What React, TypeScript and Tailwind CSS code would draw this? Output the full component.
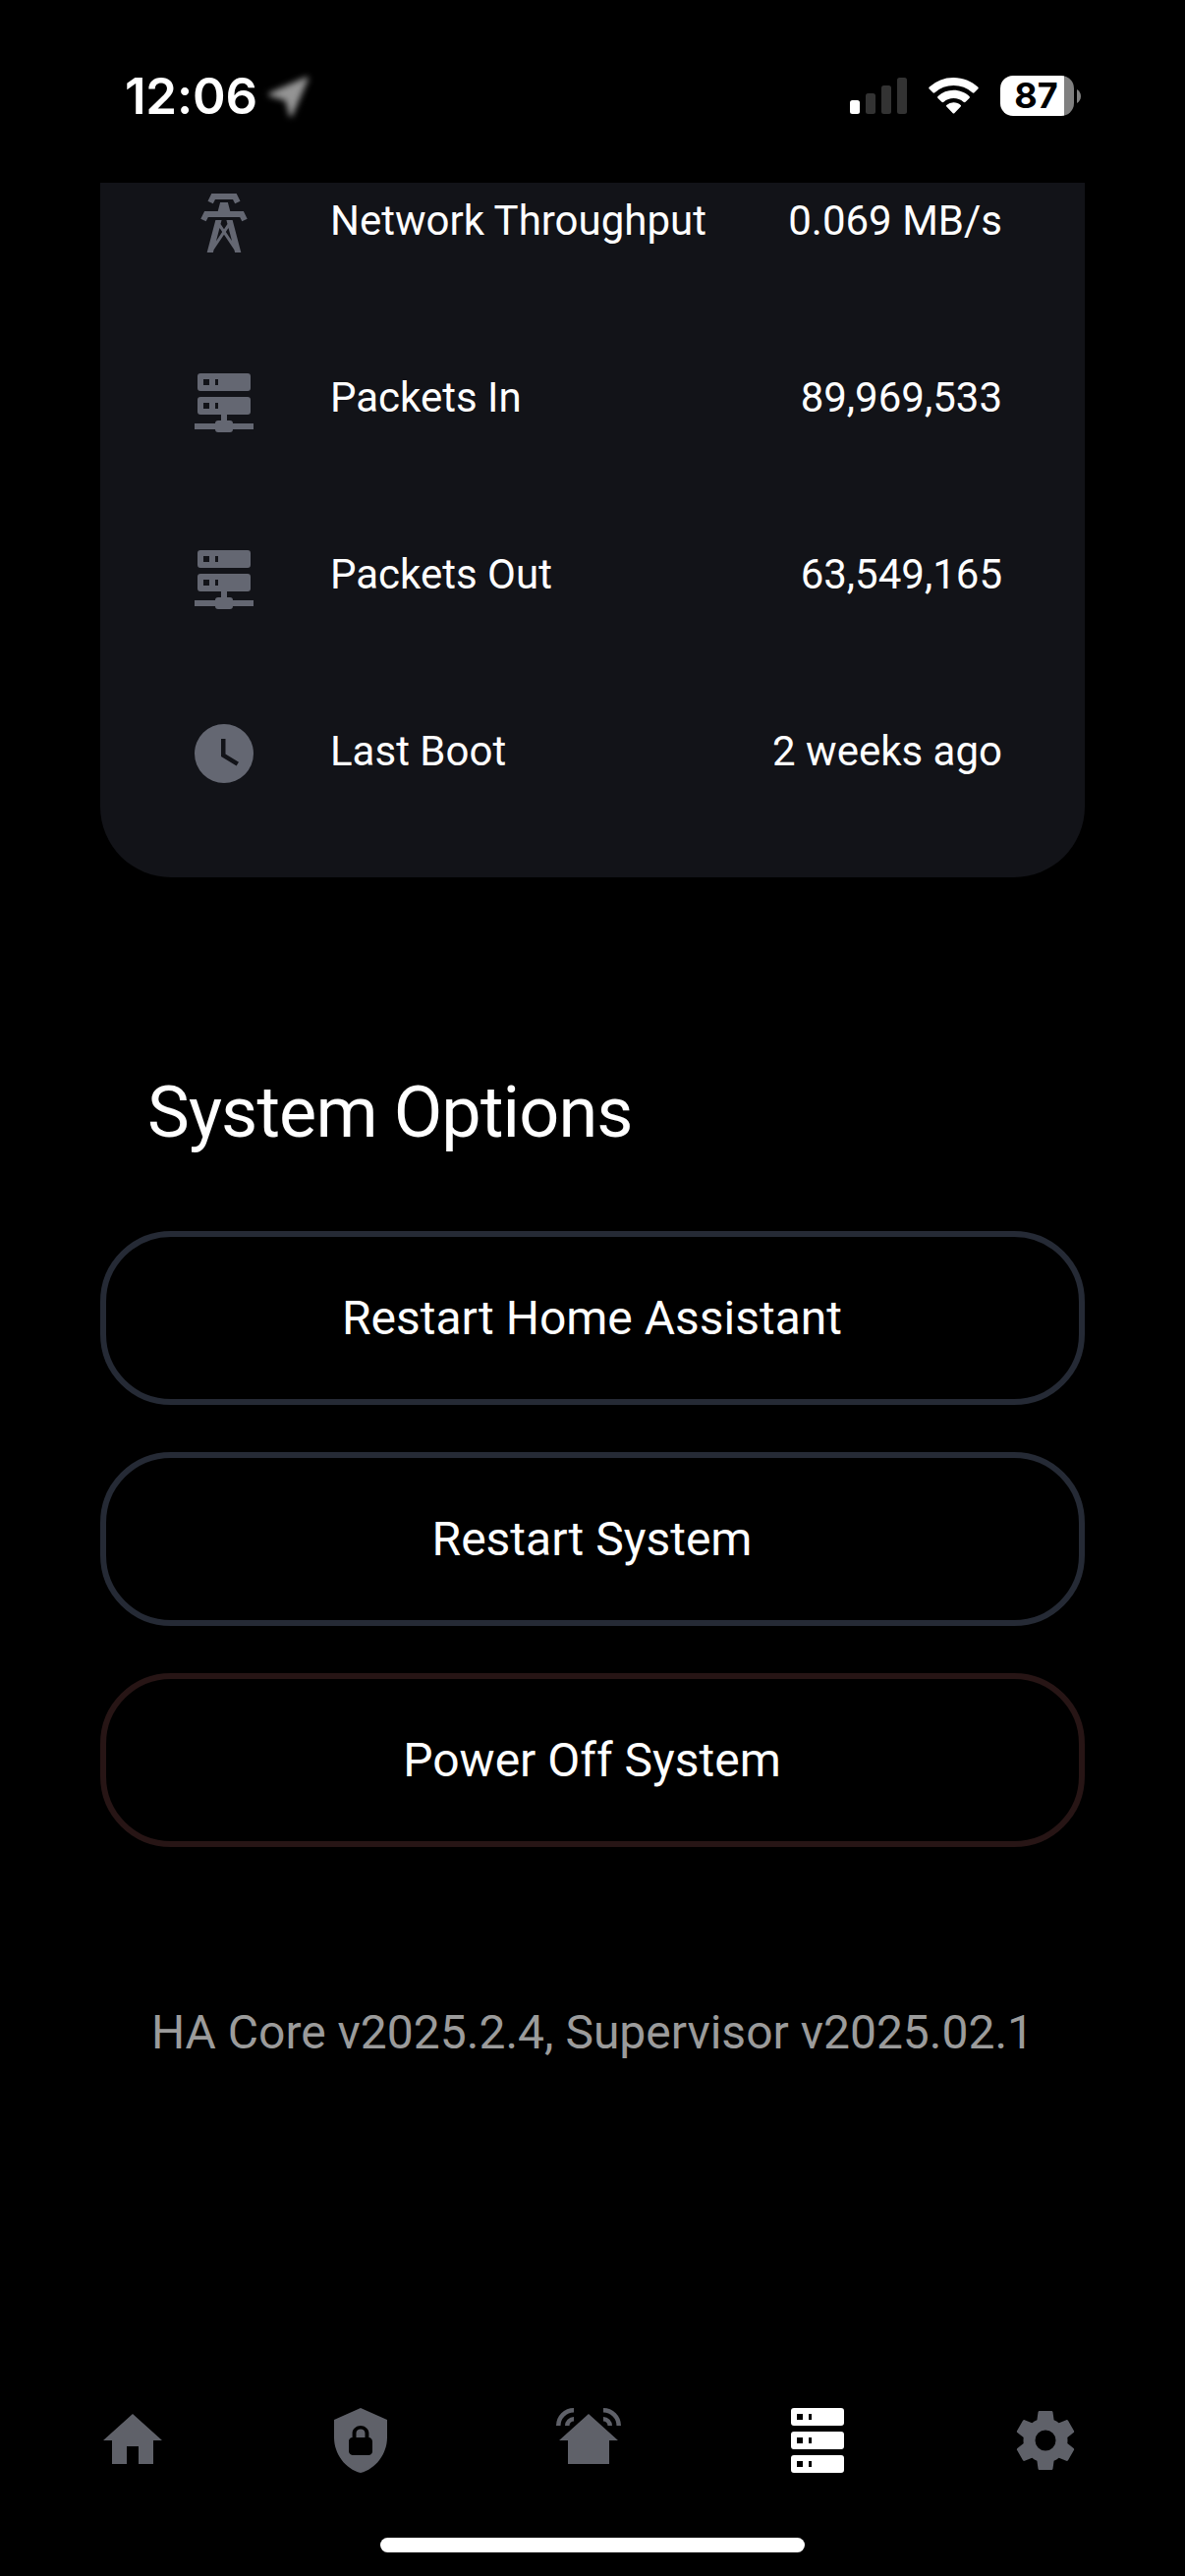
import React from "react";

const ICONS = {
  tower:
    "M8.28,5.45L6.5,4.55L7.76,2H16.23L17.5,4.55L15.72,5.44L15,4H9L8.28,5.45M18.62,8H14.09L13.3,5H10.7L9.91,8H5.38L4.1,10.55L5.89,11.44L6.62,10H17.38L18.1,11.45L19.89,10.56L18.62,8M17.77,22H15.7L15.46,21.1L12,15.9L8.53,21.1L8.3,22H6.23L9.12,11H11.19L10.83,12.35L12,14.1L13.16,12.35L12.81,11H14.88L17.77,22M11.4,15L10.5,13.65L9.32,18.13L11.4,15M14.68,18.12L13.5,13.64L12.6,15L14.68,18.12Z",
  serverNetwork:
    "M13,19H14A1,1 0 0,1 15,20H22V22H15A1,1 0 0,1 14,23H10A1,1 0 0,1 9,22H2V20H9A1,1 0 0,1 10,19H11V17H4A1,1 0 0,1 3,16V12A1,1 0 0,1 4,11H20A1,1 0 0,1 21,12V16A1,1 0 0,1 20,17H13V19M4,3H20A1,1 0 0,1 21,4V8A1,1 0 0,1 20,9H4A1,1 0 0,1 3,8V4A1,1 0 0,1 4,3M9,7H10V5H9V7M9,15H10V13H9V15M5,5V7H7V5H5M5,13V15H7V13H5Z",
  clock:
    "M12,2A10,10 0 0,0 2,12A10,10 0 0,0 12,22A10,10 0 0,0 22,12A10,10 0 0,0 12,2M16.2,16.2L11,13V7H12.5V12.2L17,14.9L16.2,16.2Z",
  home: "M10,20V14H14V20H19V12H22L12,3L2,12H5V20H10Z",
  shieldLock:
    "M12,1L3,5V11C3,16.55 6.84,21.74 12,23C17.16,21.74 21,16.55 21,11V5L12,1M12,7C13.4,7 14.8,8.1 14.8,9.5V11C15.4,11 16,11.6 16,12.3V15.8C16,16.4 15.4,17 14.7,17H9.2C8.6,17 8,16.4 8,15.7V12.2C8,11.6 8.6,11 9.2,11V9.5C9.2,8.1 10.6,7 12,7M12,8.2C11.2,8.2 10.5,8.7 10.5,9.5V11H13.5V9.5C13.5,8.7 12.8,8.2 12,8.2Z",
  homeSound:
    "M12,3L2,12H5V20H19V12H22L12,3M7,1V2.5A4.5,4.5 0 0,0 2.5,7H1A6,6 0 0,1 7,1M7,4V5.5A1.5,1.5 0 0,0 5.5,7H4A3,3 0 0,1 7,4M17,1V2.5A4.5,4.5 0 0,1 21.5,7H23A6,6 0 0,0 17,1M17,4V5.5A1.5,1.5 0 0,1 18.5,7H20A3,3 0 0,0 17,4Z",
  server:
    "M4,1H20A1,1 0 0,1 21,2V6A1,1 0 0,1 20,7H4A1,1 0 0,1 3,6V2A1,1 0 0,1 4,1M4,9H20A1,1 0 0,1 21,10V14A1,1 0 0,1 20,15H4A1,1 0 0,1 3,14V10A1,1 0 0,1 4,9M4,17H20A1,1 0 0,1 21,18V22A1,1 0 0,1 20,23H4A1,1 0 0,1 3,22V18A1,1 0 0,1 4,17M9,5H10V3H9V5M9,13H10V11H9V13M9,21H10V19H9V21M5,3V5H7V3H5M5,11V13H7V11H5M5,19V21H7V19H5Z",
  cog:
    "M12,15.5A3.5,3.5 0 0,1 8.5,12A3.5,3.5 0 0,1 12,8.5A3.5,3.5 0 0,1 15.5,12A3.5,3.5 0 0,1 12,15.5M19.43,12.97C19.47,12.65 19.5,12.33 19.5,12C19.5,11.67 19.47,11.34 19.43,11L21.54,9.37C21.73,9.22 21.78,8.95 21.66,8.73L19.66,5.27C19.54,5.05 19.27,4.96 19.05,5.05L16.56,6.05C16.04,5.66 15.5,5.32 14.87,5.07L14.5,2.42C14.46,2.18 14.25,2 14,2H10C9.75,2 9.54,2.18 9.5,2.42L9.13,5.07C8.5,5.32 7.96,5.66 7.44,6.05L4.95,5.05C4.73,4.96 4.46,5.05 4.34,5.27L2.34,8.73C2.21,8.95 2.27,9.22 2.46,9.37L4.57,11C4.53,11.34 4.5,11.67 4.5,12C4.5,12.33 4.53,12.65 4.57,12.97L2.46,14.63C2.27,14.78 2.21,15.05 2.34,15.27L4.34,18.73C4.46,18.95 4.73,19.03 4.95,18.95L7.44,17.94C7.96,18.34 8.5,18.68 9.13,18.93L9.5,21.58C9.54,21.82 9.75,22 10,22H14C14.25,22 14.46,21.82 14.5,21.58L14.87,18.93C15.5,18.67 16.04,18.34 16.56,17.94L19.05,18.95C19.27,19.03 19.54,18.95 19.66,18.73L21.66,15.27C21.78,15.05 21.73,14.78 21.54,14.63L19.43,12.97Z",
};

type IconName = keyof typeof ICONS;

function Icon({ name, className }: { name: IconName; className?: string }) {
  return (
    <svg viewBox="0 0 24 24" className={`size-[72px] shrink-0 ${className ?? ""}`} fill="currentColor">
      <path fillRule="evenodd" d={ICONS[name]} />
    </svg>
  );
}

const ROWS: { icon: IconName; label: string; value: string }[] = [
  { icon: "tower", label: "Network Throughput", value: "0.069 MB/s" },
  { icon: "serverNetwork", label: "Packets In", value: "89,969,533" },
  { icon: "serverNetwork", label: "Packets Out", value: "63,549,165" },
  { icon: "clock", label: "Last Boot", value: "2 weeks ago" },
];

const ACTIONS = [
  { label: "Restart Home Assistant", border: "border-[#252a35]" },
  { label: "Restart System", border: "border-[#252a35]" },
  { label: "Power Off System", border: "border-[#271515]" },
];

const TABS: { icon: IconName; active?: boolean }[] = [
  { icon: "home" },
  { icon: "shieldLock" },
  { icon: "homeSound" },
  { icon: "server", active: true },
  { icon: "cog" },
];

function StatusBar() {
  return (
    <header className="flex h-[186px] items-start justify-between pl-[127px] pr-[106px] pt-[76px] font-[Inter,sans-serif]">
      <div className="flex h-[43px] items-center">
        <span className="w-[144px] whitespace-nowrap text-[51px] font-semibold leading-[43px] tracking-[-0.2px]">12:06</span>
        <svg viewBox="0 0 50 50" className="size-[50px] blur-[3px]">
          <path d="M41 7 L25 44 L21 28 L4 23 Z" fill="#949494" stroke="#949494" strokeWidth="3.5" strokeLinejoin="round" />
        </svg>
      </div>
      <div className="flex h-[43px] items-start pt-px">
        <svg viewBox="0 0 58 41" className="h-[41px] w-[58px]">
          <rect x="0" y="25" width="10" height="14" rx="2.5" fill="#fff" />
          <rect x="16" y="18" width="10" height="21" rx="2.5" fill="#333" />
          <rect x="32" y="10" width="10" height="29" rx="2.5" fill="#333" />
          <rect x="48" y="2" width="10" height="37" rx="2.5" fill="#333" />
        </svg>
        <svg viewBox="0 0 52 41" className="ml-[22px] h-[41px] w-[52px]" fill="#fff">
          <path d="M25.5 2C35 2 43.8 5.600 50.200 11.600Q51.200 12.600 50.300 13.600L46.600 17.300Q45.600 18.200 44.600 17.300A28.300 28.300 0 0 0 6.400 17.300Q5.400 18.200 4.400 17.300L.7 13.600Q-.2 12.600.8 11.600A36 36 0 0 1 25.500 2Z" />
          <path d="M25.500 14.700C31.600 14.700 37.200 17 41.500 20.900Q42.500 21.900 41.500 22.900L37.600 26.700Q36.600 27.600 35.500 26.700A15.500 15.500 0 0 0 15.500 26.700Q14.400 27.600 13.400 26.700L9.500 22.900Q8.500 21.900 9.500 20.900A24 24 0 0 1 25.500 14.700Z" />
          <path d="M25.500 27.300C28.300 27.300 30.800 28.300 32.700 29.900Q33.500 30.700 32.700 31.600L26.500 37.900Q25.500 38.900 24.500 37.900L18.300 31.600Q17.500 30.700 18.300 29.900A11 11 0 0 1 25.500 27.300Z" />
        </svg>
        <div className="ml-[21px] flex items-center">
          <div className="flex h-[41px] w-[75px] items-center justify-center rounded-[13px] bg-linear-to-r from-white from-[65px] to-[#808080] to-[65px] pr-[2px] text-[36px] font-bold leading-[41px] text-black">
            87
          </div>
          <svg viewBox="0 0 4 14" className="ml-[3px] h-[14px] w-[4px]">
            <path d="M0 0C2.500 1.500 4 4 4 7S2.500 12.500 0 14Z" fill="#808080" />
          </svg>
        </div>
      </div>
    </header>
  );
}

export default function App() {
  return (
    <div className="flex h-[2622px] w-[1206px] flex-col overflow-hidden bg-black font-[Roboto,sans-serif] text-white">
      <StatusBar />
      <main className="flex flex-1 flex-col px-[102px]">
        <section className="h-[707px] overflow-hidden rounded-b-[72px] bg-[#121318]">
          <ul className="-mt-[49px] pl-[90px] pr-[84px]">
            {ROWS.map((row) => (
              <li key={row.label} className="flex h-[180px] items-center">
                <Icon name={row.icon} className="text-[#646772]" />
                <span className="ml-[72px] flex-1 pb-[5px] text-[42px] leading-[60px]">{row.label}</span>
                <span className="pb-[5px] text-[42px] leading-[60px]">{row.value}</span>
              </li>
            ))}
          </ul>
        </section>

        <h1 className="mt-[195px] pl-[48px] text-[72px] leading-[90px] tracking-[-0.012em]">System Options</h1>

        <div className="mt-[75px] flex flex-col gap-[48px]">
          {ACTIONS.map((a) => (
            <button key={a.label} className={`h-[177px] rounded-[72px] border-[6px] pr-[1px] text-[48px] leading-[60px] ${a.border}`}>
              {a.label}
            </button>
          ))}
        </div>

        <p className="mt-[159px] text-center text-[48px] leading-[60px] text-[#9b9b9b]">
          HA Core v2025.2.4, Supervisor v2025.02.1
        </p>
      </main>

      <nav className="ml-[18.6px] flex h-[72px] w-[1161.6px]">
        {TABS.map((t) => (
          <a key={t.icon} className={`flex flex-1 justify-center ${t.active ? "text-white" : "text-[#5f6169]"}`}>
            <Icon name={t.icon} />
          </a>
        ))}
      </nav>
      <div className="mx-auto mb-[24px] mt-[63px] h-[15px] w-[432px] rounded-full bg-white" />
    </div>
  );
}
